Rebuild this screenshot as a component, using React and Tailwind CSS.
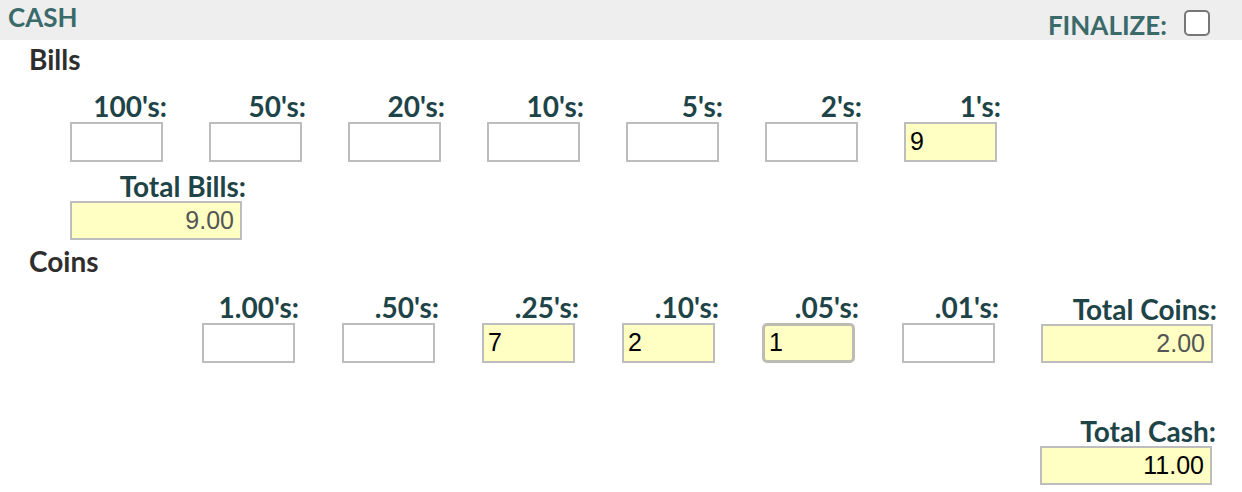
import React from 'react';

const bills = [
    { label: "100's:", value: '' },
    { label: "50's:", value: '' },
    { label: "20's:", value: '' },
    { label: "10's:", value: '' },
    { label: "5's:", value: '' },
    { label: "2's:", value: '' },
    { label: "1's:", value: '9' },
];

const coins = [
    { label: "1.00's:", value: '' },
    { label: ".50's:", value: '' },
    { label: ".25's:", value: '7' },
    { label: ".10's:", value: '2' },
    { label: ".05's:", value: '1', focused: true },
    { label: ".01's:", value: '' },
];

const labelCls = "text-[28px] font-bold leading-[28px] text-[#1e4448] font-['Lato',sans-serif] text-right whitespace-nowrap";

const Field = ({ label, value, focused }) => (
    <div className="flex flex-col items-end w-[97px]">
        <div className={labelCls}>{label}</div>
        <div
            className={
                'mt-[2px] mr-[4px] w-[93px] h-[40px] flex items-center pl-[4px] text-[25px] text-black font-["Liberation_Sans",Arial,sans-serif] ' +
                (focused
                    ? 'border-[3px] border-[#bcbcb4] rounded-[5px] bg-[#ffffc4]'
                    : value
                    ? 'border-2 border-[#bdbdbd] bg-[#ffffc4]'
                    : 'border-2 border-[#bdbdbd] bg-white')
            }
        >
            {value}
        </div>
    </div>
);

const Total = ({ label, value, muted, className = '' }) => (
    <div className={'flex flex-col items-end w-[176px] ' + className}>
        <div className={labelCls}>{label}</div>
        <div
            className={
                'mt-[1px] mr-[4px] w-[172px] h-[39px] flex items-center justify-end pr-[6px] border-2 border-[#bdbdbd] bg-[#ffffc4] text-[25px] font-["Liberation_Sans",Arial,sans-serif] ' +
                (muted ? 'text-[#555]' : 'text-black')
            }
        >
            {value}
        </div>
    </div>
);

const App = () => {
    return (
        <div className="w-[1242px] h-[492px] bg-white overflow-hidden font-['Lato',sans-serif]">
            <div className="h-[40px] bg-[#eeeeee] flex justify-between pl-[8px] pr-[32px]">
                <div className="text-[26px] font-bold leading-[28px] text-[#3a6a6a] pt-[3px]">CASH</div>
                <div className="flex items-start">
                    <span className="text-[26px] font-bold leading-[28px] text-[#3a6a6a] mt-[11px] mr-[17px]">FINALIZE:</span>
                    <span className="mt-[10px] w-[26px] h-[26px] rounded-[5px] border-2 border-[#777] bg-white"></span>
                </div>
            </div>

            <div className="pl-[29px] mt-[5px] text-[28px] font-bold leading-[28px] text-[#2e2e2e]">Bills</div>

            <div className="flex gap-[42px] pl-[70px] mt-[19px]">
                {bills.map((b, i) => (
                    <Field key={i} {...b} />
                ))}
            </div>

            <div className="pl-[70px] mt-[10px]">
                <Total label="Total Bills:" value="9.00" muted />
            </div>

            <div className="pl-[29px] mt-[7px] text-[28px] font-bold leading-[28px] text-[#2e2e2e]">Coins</div>

            <div className="flex gap-[43px] pl-[202px] mt-[18px] items-end">
                {coins.map((c, i) => (
                    <Field key={i} {...c} />
                ))}
                <Total label="Total Coins:" value="2.00" muted className="-ml-[1px]" />
            </div>

            <div className="flex justify-end pr-[26px] mt-[54px]">
                <Total label="Total Cash:" value="11.00" />
            </div>
        </div>
    );
};

export default App;
